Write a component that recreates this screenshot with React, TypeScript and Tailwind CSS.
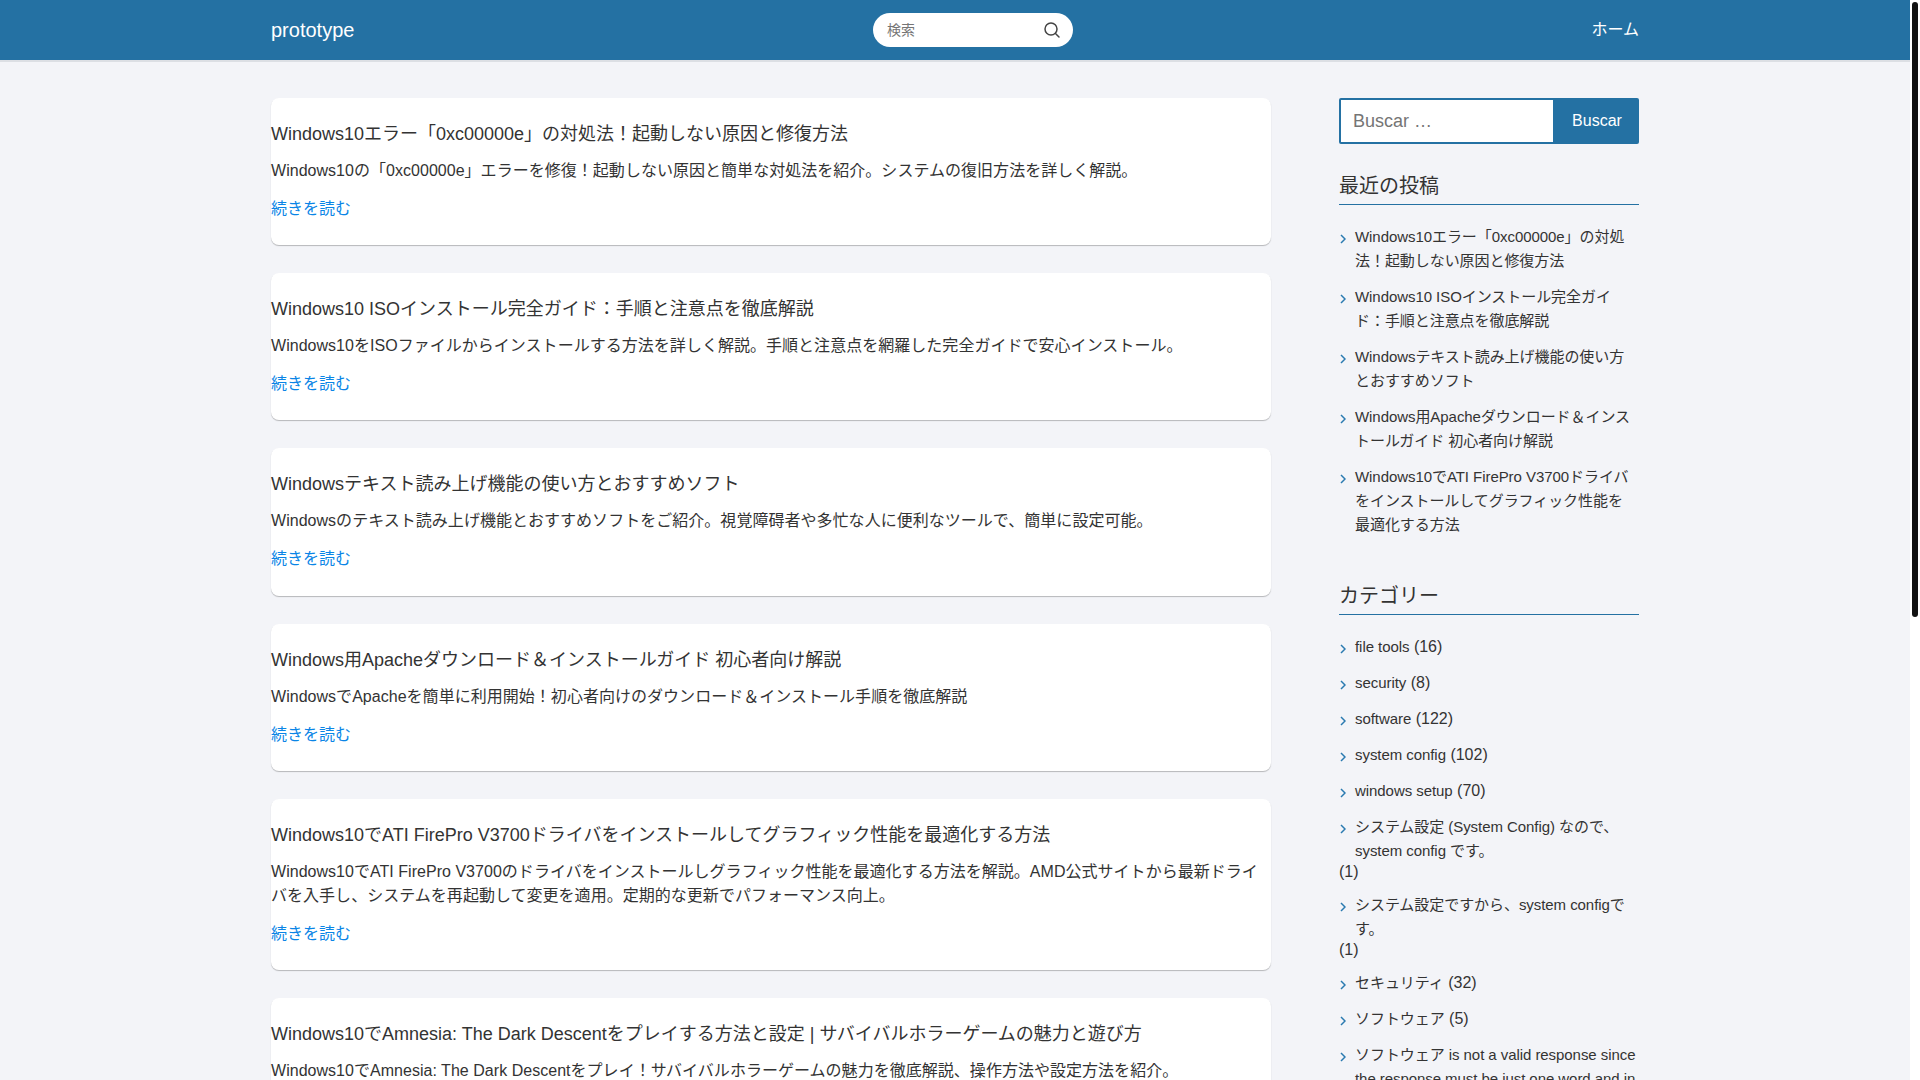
import React from "react";

const posts = [
  {
    title: "Windows10エラー「0xc00000e」の対処法！起動しない原因と修復方法",
    body: "Windows10の「0xc00000e」エラーを修復！起動しない原因と簡単な対処法を紹介。システムの復旧方法を詳しく解説。",
  },
  {
    title: "Windows10 ISOインストール完全ガイド：手順と注意点を徹底解説",
    body: "Windows10をISOファイルからインストールする方法を詳しく解説。手順と注意点を網羅した完全ガイドで安心インストール。",
  },
  {
    title: "Windowsテキスト読み上げ機能の使い方とおすすめソフト",
    body: "Windowsのテキスト読み上げ機能とおすすめソフトをご紹介。視覚障碍者や多忙な人に便利なツールで、簡単に設定可能。",
  },
  {
    title: "Windows用Apacheダウンロード＆インストールガイド 初心者向け解説",
    body: "WindowsでApacheを簡単に利用開始！初心者向けのダウンロード＆インストール手順を徹底解説",
  },
  {
    title: "Windows10でATI FirePro V3700ドライバをインストールしてグラフィック性能を最適化する方法",
    body: "Windows10でATI FirePro V3700のドライバをインストールしグラフィック性能を最適化する方法を解説。AMD公式サイトから最新ドライバを入手し、システムを再起動して変更を適用。定期的な更新でパフォーマンス向上。",
  },
  {
    title: "Windows10でAmnesia: The Dark Descentをプレイする方法と設定 | サバイバルホラーゲームの魅力と遊び方",
    body: "Windows10でAmnesia: The Dark Descentをプレイ！サバイバルホラーゲームの魅力を徹底解説、操作方法や設定方法を紹介。",
  },
];

const recent = [
  "Windows10エラー「0xc00000e」の対処法！起動しない原因と修復方法",
  "Windows10 ISOインストール完全ガイド：手順と注意点を徹底解説",
  "Windowsテキスト読み上げ機能の使い方とおすすめソフト",
  "Windows用Apacheダウンロード＆インストールガイド 初心者向け解説",
  "Windows10でATI FirePro V3700ドライバをインストールしてグラフィック性能を最適化する方法",
];

const categories: [string, number][] = [
  ["file tools", 16],
  ["security", 8],
  ["software", 122],
  ["system config", 102],
  ["windows setup", 70],
  ["システム設定 (System Config) なので、system config です。", 1],
  ["システム設定ですから、system configです。", 1],
  ["セキュリティ", 32],
  ["ソフトウェア", 5],
  ["ソフトウェア is not a valid response since the response must be just one word and in English.", 1],
];

function Chevron() {
  return (
    <svg
      className="absolute left-[1px] top-[9px]"
      width="6"
      height="10"
      viewBox="0 0 6 10"
      fill="none"
      stroke="#2a7ab0"
      strokeWidth="1.5"
    >
      <path d="M1 1l4 4-4 4" />
    </svg>
  );
}

export default function App() {
  return (
    <div className="h-screen overflow-hidden flex bg-white text-[#333] font-['Liberation_Sans','Noto_Sans_CJK_JP',sans-serif]">
      <div className="flex-1 min-w-0 h-full overflow-hidden bg-[#f3f4f8]">
        <header className="h-[62px] bg-[#2471a3] border-b-2 border-[#dcdfe4]">
          <div className="w-[1368px] mx-auto h-[60px] grid grid-cols-3 items-center">
            <a className="text-[20px] text-white">prototype</a>
            <div className="flex justify-start">
              <div className="ml-[146px] w-[200px] h-[34px] shrink-0 rounded-full bg-white flex items-center pl-[14px] pr-[12px]">
                <input
                  placeholder="検索"
                  className="flex-1 min-w-0 text-[14px] outline-none bg-transparent placeholder:text-[#757575]"
                />
                <svg width="18" height="18" viewBox="0 0 18 18" fill="none" stroke="#444" strokeWidth="1.5" strokeLinecap="round">
                  <circle cx="8" cy="8" r="6" />
                  <path d="M12.5 12.5l3.5 3.5" />
                </svg>
              </div>
            </div>
            <nav className="text-right text-[16px] text-white">ホーム</nav>
          </div>
        </header>

        <div className="w-[1368px] mx-auto flex justify-between items-start pt-[36px]">
          <main className="w-[1000px] flex flex-col gap-[28px]">
            {posts.map((p) => (
              <article key={p.title} className="bg-white rounded-lg shadow-[0_1px_1px_rgba(0,0,0,0.25)] pt-[21px] pb-[24.2px]">
                <h2 className="text-[18px] leading-[30px] mb-[10px]">{p.title}</h2>
                <p className="text-[16px] leading-6 tracking-[0.03px] mb-[14px]">{p.body}</p>
                <a className="block text-[16px] leading-6 text-[#0a85e6]">続きを読む</a>
              </article>
            ))}
          </main>

          <aside className="w-[300px]">
            <form className="flex h-[46px] mb-[27px]">
              <input
                placeholder="Buscar …"
                className="flex-1 min-w-0 bg-white border-2 border-[#2471a3] rounded-l-[2px] px-3 text-[18px] outline-none placeholder:text-[#757575]"
              />
              <button type="button" className="w-[84px] bg-[#2471a3] text-white text-[16px] rounded-r-[2px]">
                Buscar
              </button>
            </form>

            <h3 className="text-[20px] leading-[30px] pb-[3px] border-b border-[#2471a3] mb-5">最近の投稿</h3>
            <ul className="mb-[44px]">
              {recent.map((r) => (
                <li key={r} className="relative pl-4 pr-1 text-[15px] leading-6 tracking-[-0.06px] mb-3">
                  <Chevron />
                  {r}
                </li>
              ))}
            </ul>

            <h3 className="text-[20px] leading-[30px] pb-[3px] border-b border-[#2471a3] mb-5">カテゴリー</h3>
            <ul>
              {categories.map(([name, n]) => (
                <li key={name} className="text-[16px] leading-[normal] mb-3">
                  <a className="relative inline-block pl-4 text-[15px] leading-6 tracking-[-0.06px]">
                    <Chevron />
                    {name}
                  </a>{" "}
                  ({n})
                </li>
              ))}
            </ul>
          </aside>
        </div>
      </div>
      <div className="w-[10px] shrink-0 h-full bg-white px-[2px] pt-[2px]">
        <div className="h-[615px] rounded-[3px] bg-[#111]" />
      </div>
    </div>
  );
}
